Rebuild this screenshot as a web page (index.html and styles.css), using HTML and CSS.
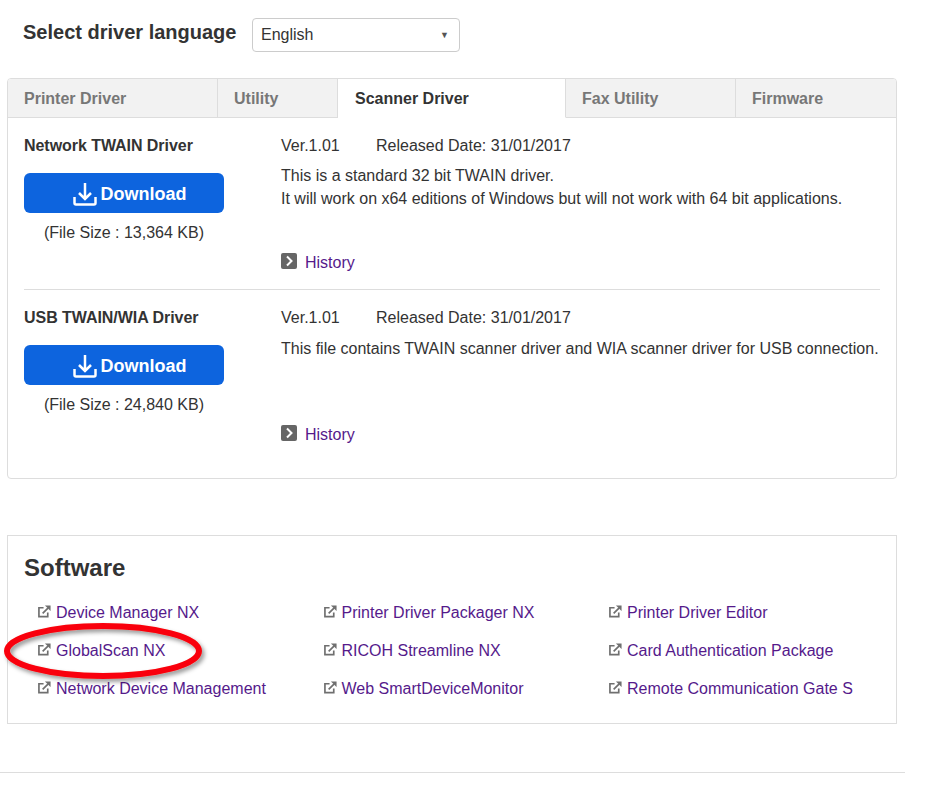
FILE: index.html
```html
<!DOCTYPE html>
<html lang="en">
<head>
<meta charset="utf-8">
<title>Drivers</title>
<link rel="stylesheet" href="styles.css">
</head>
<body>
<div class="page">
  <div class="lang-row">
    <h2 class="lang-title">Select driver language</h2>
    <div class="select"><span>English</span><span class="caret">▼</span></div>
  </div>
  <section class="card">
    <nav class="tabs">
      <a class="tab t1">Printer Driver</a>
      <a class="tab t2">Utility</a>
      <a class="tab t3 active">Scanner Driver</a>
      <a class="tab t4">Fax Utility</a>
      <a class="tab t5">Firmware</a>
    </nav>
    <div class="rows">
      <article class="row">
        <div class="left">
          <h3 class="name">Network TWAIN Driver</h3>
          <a class="btn"><svg class="dl" viewBox="0 0 24 24"><path d="M12 1v16M6 11l6 6 6-6M1.500 15v6a1.500 1.500 0 0 0 1.500 1.500h18a1.500 1.500 0 0 0 1.500-1.500v-6"/></svg>Download</a>
          <p class="size">(File Size : 13,364 KB)</p>
        </div>
        <div class="right">
          <p class="meta"><span class="ver">Ver.1.01</span><span>Released Date: 31/01/2017</span></p>
          <p class="desc">This is a standard 32 bit TWAIN driver.<br>It will work on x64 editions of Windows but will not work with 64 bit applications.</p>
          <a class="history"><span class="hicon"><svg viewBox="0 0 16 16"><path d="M6 3.500l4.500 4.500L6 12.500"/></svg></span>History</a>
        </div>
      </article>
      <article class="row last">
        <div class="left">
          <h3 class="name">USB TWAIN/WIA Driver</h3>
          <a class="btn"><svg class="dl" viewBox="0 0 24 24"><path d="M12 1v16M6 11l6 6 6-6M1.500 15v6a1.500 1.500 0 0 0 1.500 1.500h18a1.500 1.500 0 0 0 1.500-1.500v-6"/></svg>Download</a>
          <p class="size">(File Size : 24,840 KB)</p>
        </div>
        <div class="right">
          <p class="meta"><span class="ver">Ver.1.01</span><span>Released Date: 31/01/2017</span></p>
          <p class="desc">This file contains TWAIN scanner driver and WIA scanner driver for USB connection.<br>&nbsp;</p>
          <a class="history"><span class="hicon"><svg viewBox="0 0 16 16"><path d="M6 3.500l4.500 4.500L6 12.500"/></svg></span>History</a>
        </div>
      </article>
    </div>
  </section>
  <section class="software">
    <h2 class="sw-title">Software</h2>
    <ul class="links">
      <li><svg class="ext" viewBox="0 0 14 14"><path d="M10.500 8v4.500H1V3h5M5 9l6-6"/><path class="head" d="M7.500.5h6v6z"/></svg><a>Device Manager NX</a></li>
      <li><svg class="ext" viewBox="0 0 14 14"><path d="M10.500 8v4.500H1V3h5M5 9l6-6"/><path class="head" d="M7.500.5h6v6z"/></svg><a>Printer Driver Packager NX</a></li>
      <li><svg class="ext" viewBox="0 0 14 14"><path d="M10.500 8v4.500H1V3h5M5 9l6-6"/><path class="head" d="M7.500.5h6v6z"/></svg><a>Printer Driver Editor</a></li>
      <li><svg class="ext" viewBox="0 0 14 14"><path d="M10.500 8v4.500H1V3h5M5 9l6-6"/><path class="head" d="M7.500.5h6v6z"/></svg><a>GlobalScan NX</a></li>
      <li><svg class="ext" viewBox="0 0 14 14"><path d="M10.500 8v4.500H1V3h5M5 9l6-6"/><path class="head" d="M7.500.5h6v6z"/></svg><a>RICOH Streamline NX</a></li>
      <li><svg class="ext" viewBox="0 0 14 14"><path d="M10.500 8v4.500H1V3h5M5 9l6-6"/><path class="head" d="M7.500.5h6v6z"/></svg><a>Card Authentication Package</a></li>
      <li><svg class="ext" viewBox="0 0 14 14"><path d="M10.500 8v4.500H1V3h5M5 9l6-6"/><path class="head" d="M7.500.5h6v6z"/></svg><a>Network Device Management</a></li>
      <li><svg class="ext" viewBox="0 0 14 14"><path d="M10.500 8v4.500H1V3h5M5 9l6-6"/><path class="head" d="M7.500.5h6v6z"/></svg><a>Web SmartDeviceMonitor</a></li>
      <li><svg class="ext" viewBox="0 0 14 14"><path d="M10.500 8v4.500H1V3h5M5 9l6-6"/><path class="head" d="M7.500.5h6v6z"/></svg><a>Remote Communication Gate S</a></li>
    </ul>
  </section>
  <hr class="foot">
  <svg class="oval" viewBox="0 0 220 72"><defs><filter id="sh" x="-10%" y="-30%" width="120%" height="160%"><feDropShadow dx="2.500" dy="3" stdDeviation="2" flood-color="#000" flood-opacity=".4"/></filter></defs><ellipse cx="103" cy="31" rx="96" ry="25" filter="url(#sh)"/></svg>
</div>
</body>
</html>
```

FILE: styles.css
```css
* { box-sizing: border-box; }
html, body { margin: 0; padding: 0; background: #fff; }
body {
  font-family: "Liberation Sans", Arial, sans-serif;
  font-size: 16px;
  color: #333;
  overflow: hidden;
}
h2, h3, p, ul { margin: 0; padding: 0; }
.page { position: relative; width: 937px; height: 785px; padding-top: 18px; }

.lang-row { display: flex; align-items: flex-start; padding-left: 23px; height: 60px; }
.lang-title { font-size: 20px; line-height: 28px; font-weight: 700; width: 229px; }
.select {
  width: 208px; height: 34px; border: 1px solid #ccc; border-radius: 4px;
  display: flex; justify-content: space-between; align-items: center;
  padding: 0 10px 0 8px; line-height: 32px;
}
.caret { font-size: 9px; color: #555; }

.card {
  width: 890px; height: 401px; margin-left: 7px;
  border: 1px solid #ddd; border-radius: 4px; overflow: hidden;
}
.tabs { display: flex; height: 39px; }
.tab {
  display: block; height: 39px; line-height: 40px; padding-left: 16px;
  font-weight: 700; color: #777; background: #f2f2f2;
  border-bottom: 1px solid #ddd; border-right: 1px solid #ddd;
}
.t1 { width: 210px; }
.t2 { width: 120px; }
.t3 { width: 228px; }
.t4 { width: 170px; }
.t5 { flex: 1; border-right: 0; }
.tab.active { background: #fff; color: #333; border-bottom-color: #fff; padding-left: 17px; }

.rows { padding: 0 16px; }
.row { display: flex; height: 172px; padding-top: 17px; border-bottom: 1px solid #ddd; }
.row.last { border-bottom: 0; }
.left { width: 257px; }
.name { font-size: 16px; line-height: 22px; font-weight: 700; letter-spacing: -0.05px; }
.btn {
  display: flex; justify-content: center; align-items: center;
  width: 200px; height: 40px; margin-top: 16px;
  background: #0d64de; border-radius: 6px;
  color: #fff; font-size: 18px; font-weight: 700;
  padding: 2px 0 0 11px;
}
.dl { width: 24px; height: 24px; margin-right: 4px; fill: none; stroke: #fff; stroke-width: 2.500; }
.size { width: 200px; margin-top: 9px; line-height: 22px; text-align: center; }
.right { flex: 1; }
.meta { display: flex; line-height: 22px; }
.ver { width: 95px; }
.desc { margin-top: 7px; line-height: 23px; height: 69px; white-space: nowrap; }
.row.last .desc { margin-top: 8px; height: 68px; }
.history { display: flex; align-items: center; height: 22px; margin-top: 19px; color: #551a8b; }
.hicon {
  width: 16px; height: 16px; background: #666; border-radius: 2px;
  margin: 1px 8px 0 0; display: block; align-self: flex-start;
}
.hicon svg { display: block; width: 16px; height: 16px; fill: none; stroke: #fff; stroke-width: 2; }

.software {
  width: 890px; height: 189px; margin: 56px 0 0 7px;
  border: 1px solid #ddd; padding: 16px 0 0 16px;
}
.sw-title { font-size: 24px; line-height: 32px; font-weight: 700; }
.links {
  list-style: none; display: grid; margin: 10px 0 0 13px;
  grid-template-columns: repeat(3, 285.5px); grid-auto-rows: 38px;
}
.links li { display: flex; align-items: center; height: 38px; }
.links a { color: #551a8b; }
.ext {
  width: 13px; height: 13px; margin: -3px 5px 0 1px; flex: none;
  fill: none; stroke: #6f6f6f; stroke-width: 1.800;
}
.ext .head { fill: #6f6f6f; stroke: none; }

.foot { width: 905px; height: 1px; border: 0; background: #ddd; margin: 48px 0 0; }
.oval {
  position: absolute; left: 0; top: 620px; width: 220px; height: 72px;
  fill: none; stroke: #f90008; stroke-width: 6;
}
```
